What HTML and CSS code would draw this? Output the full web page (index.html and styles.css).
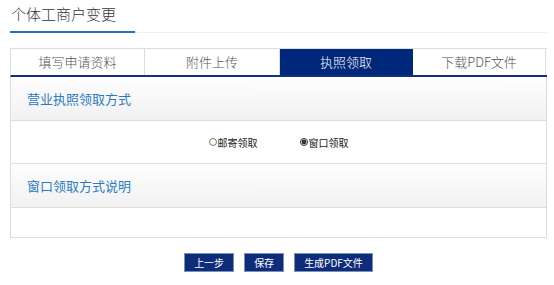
FILE: index.html
```html
<!DOCTYPE html>
<html>
    <head>
        <title>个体工商户变更</title>
        <meta charset="UTF-8">
        <link rel="stylesheet" href="styles.css">
    </head>
    <body>
        <div id="main">
            <div class="pageTitle"><span>个体工商户变更</span></div>

            <div class="tabs">
                <div class="tab">填写申请资料</div>
                <div class="tab">附件上传</div>
                <div class="tab active">执照领取</div>
                <div class="tab">下载PDF文件</div>
            </div>

            <div class="panel">
                <div class="sectionHead">营业执照领取方式</div>
                <div class="radioRow">
                    <label><input type="radio" name="way">邮寄领取</label>
                    <label><input type="radio" name="way" checked>窗口领取</label>
                </div>
                <div class="sectionHead">窗口领取方式说明</div>
                <div class="sectionBody"></div>
            </div>

            <div class="actions">
                <button type="button">上一步</button>
                <button type="button">保存</button>
                <button type="button">生成PDF文件</button>
            </div>
        </div>
    </body>
</html>
```
FILE: styles.css
```css
body{
    margin:0;
    background:#fff;
    font-family:"Noto Sans CJK SC","Liberation Sans",sans-serif;
    color:#333;
}
#main{
    width:537px;
    padding:0 0 0 10px;
}
.pageTitle{
    height:33px;
    border-bottom:1px solid #edf2f8;
    box-sizing:border-box;
    margin-right:-1px;
}
.pageTitle span{
    display:inline-block;
    width:125px;
    height:33px;
    box-sizing:border-box;
    border-bottom:2px solid #2b6fbd;
    padding-left:1px;
    font-size:15px;
    font-weight:300;
    line-height:28px;
    color:#333;
}
.tabs{
    margin-top:15px;
    display:grid;
    grid-template-columns:134px 135px 133px 133px;
    border-top:1px solid #ddd;
    border-left:1px solid #ddd;
    border-bottom:2px solid #12317a;
    height:29px;
    box-sizing:border-box;
}
.tab{
    border-right:1px solid #ddd;
    text-align:center;
    font-size:13px;
    font-weight:300;
    line-height:26px;
    color:#555;
}
.tab.active{
    background:#00287a;
    color:#fff;
    border-right-color:#00287a;
}
.panel{
    border:1px solid #ddd;
    border-top:0;
}
.sectionHead{
    height:44px;
    box-sizing:border-box;
    border-bottom:1px solid #ddd;
    background:linear-gradient(#fefefe,#f1f1f1);
    padding-left:16px;
    font-size:13px;
    line-height:44px;
    color:#2b7bc4;
}
.radioRow{
    height:43px;
    box-sizing:border-box;
    border-bottom:1px solid #ddd;
    display:flex;
    justify-content:center;
    align-items:center;
    gap:42px;
    font-size:10px;
    color:#222;
}
.radioRow label{
    display:flex;
    align-items:center;
}
.radioRow input{
    width:8px;
    height:8px;
    margin:0 1px 0 0;
    accent-color:#333;
}
.sectionBody{
    height:29px;
}
.actions{
    display:flex;
    justify-content:center;
    gap:10px;
    margin-top:15px;
}
.actions button{
    height:19px;
    padding:0 9px;
    border:1px solid #7d8fb8;
    background:#0d2c7a;
    color:#fff;
    font-family:"Noto Sans CJK SC","Liberation Sans",sans-serif;
    font-size:10px;
    line-height:16px;
}
```
